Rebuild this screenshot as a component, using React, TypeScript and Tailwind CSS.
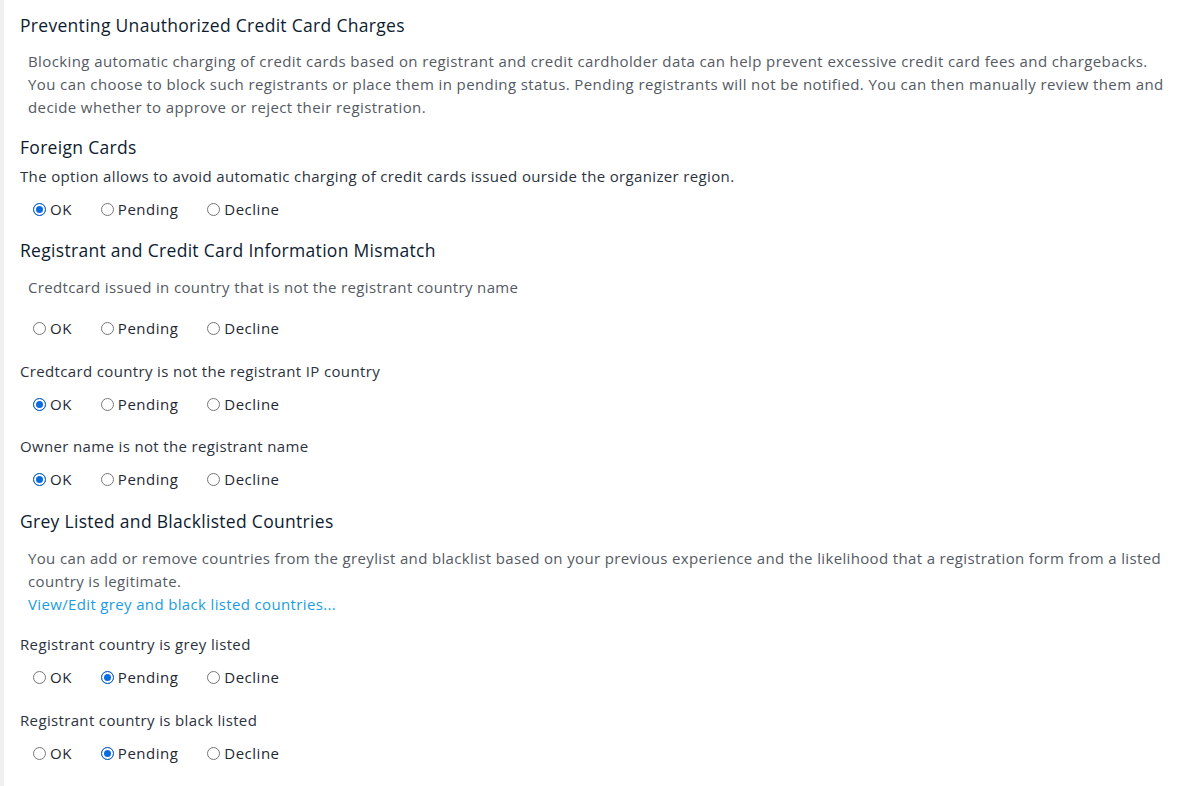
import { useState } from 'react';

type Choice = 'ok' | 'pending' | 'decline';

const OPTIONS: { value: Choice; label: string }[] = [
  { value: 'ok', label: 'OK' },
  { value: 'pending', label: 'Pending' },
  { value: 'decline', label: 'Decline' },
];

function RadioRow({ name, initial, className }: { name: string; initial?: Choice; className: string }) {
  const [value, setValue] = useState<Choice | undefined>(initial);
  return (
    <div className={`flex items-center h-[23px] pl-[13px] ${className}`}>
      {OPTIONS.map(opt => (
        <label key={opt.value} className="flex items-center mr-[29px] cursor-pointer text-[15px] tracking-[0.5px] text-[#1f2733]">
          <span className="relative flex items-center justify-center w-[13px] h-[13px] rounded-full border border-[#777] bg-white mr-[4px]">
            {value === opt.value && (
              <span className="absolute inset-[-1px] rounded-full border-[1px] border-[#0b6be0] flex items-center justify-center">
                <span className="w-[7px] h-[7px] rounded-full bg-[#0b6be0]" />
              </span>
            )}
          </span>
          <input
            type="radio"
            name={name}
            className="hidden"
            checked={value === opt.value}
            onChange={() => setValue(opt.value)}
          />
          {opt.label}
        </label>
      ))}
    </div>
  );
}

export default function App() {
  return (
    <div className="min-h-[786px] bg-white border-l-4 border-[#efefef] pl-4 pr-4 font-['Open_Sans',sans-serif] text-[#2c3340] tracking-[0.35px]">
      {/* Intro */}
      <h2 className="pt-[13px] text-[17.5px] leading-6 tracking-[0.3px] text-[#0e1c30]">Preventing Unauthorized Credit Card Charges</h2>
      <p className="mt-[13px] pl-2 text-[15px] leading-[23px] tracking-[0.4px] text-[#545a63] whitespace-nowrap">
        <span className="block">Blocking automatic charging of credit cards based on registrant and credit cardholder data can help prevent excessive credit card fees and chargebacks.</span>
        <span className="block">You can choose to block such registrants or place them in pending status. Pending registrants will not be notified. You can then manually review them and</span>
        <span className="block">decide whether to approve or reject their registration.</span>
      </p>

      {/* Foreign cards */}
      <h3 className="mt-[16px] text-[17.5px] leading-6 tracking-[0.3px] text-[#0e1c30]">Foreign Cards</h3>
      <p className="mt-[6px] text-[15px] leading-[23px]">The option allows to avoid automatic charging of credit cards issued ourside the organizer region.</p>
      <RadioRow name="foreign" initial="ok" className="mt-[10px]" />

      {/* Mismatch */}
      <h3 className="mt-[17px] text-[17.5px] leading-6 tracking-[0.3px] text-[#0e1c30]">Registrant and Credit Card Information Mismatch</h3>
      <p className="mt-[14px] pl-2 text-[15px] leading-[23px] text-[#545a63]">Credtcard issued in country that is not the registrant country name</p>
      <RadioRow name="issued" className="mt-[18px]" />

      <p className="mt-[20px] text-[15px] leading-[23px]">Credtcard country is not the registrant IP country</p>
      <RadioRow name="ip" initial="ok" className="mt-[10px]" />

      <p className="mt-[19px] text-[15px] leading-[23px]">Owner name is not the registrant name</p>
      <RadioRow name="owner" initial="ok" className="mt-[10px]" />

      {/* Grey / black lists */}
      <h3 className="mt-[18px] text-[17.5px] leading-6 tracking-[0.3px] text-[#0e1c30]">Grey Listed and Blacklisted Countries</h3>
      <div className="mt-[14px] pl-2 text-[15px] leading-[23px] text-[#545a63]">
        <p className="whitespace-nowrap">
          <span className="block">You can add or remove countries from the greylist and blacklist based on your previous experience and the likelihood that a registration form from a listed</span>
          <span className="block">country is legitimate.</span>
        </p>
        <a href="#" className="text-[#1b9de0]">View/Edit grey and black listed countries...</a>
      </div>

      <p className="mt-[17px] text-[15px] leading-[23px]">Registrant country is grey listed</p>
      <RadioRow name="grey" initial="pending" className="mt-[10px]" />

      <p className="mt-[20px] text-[15px] leading-[23px]">Registrant country is black listed</p>
      <RadioRow name="black" initial="pending" className="mt-[10px]" />
    </div>
  );
}
